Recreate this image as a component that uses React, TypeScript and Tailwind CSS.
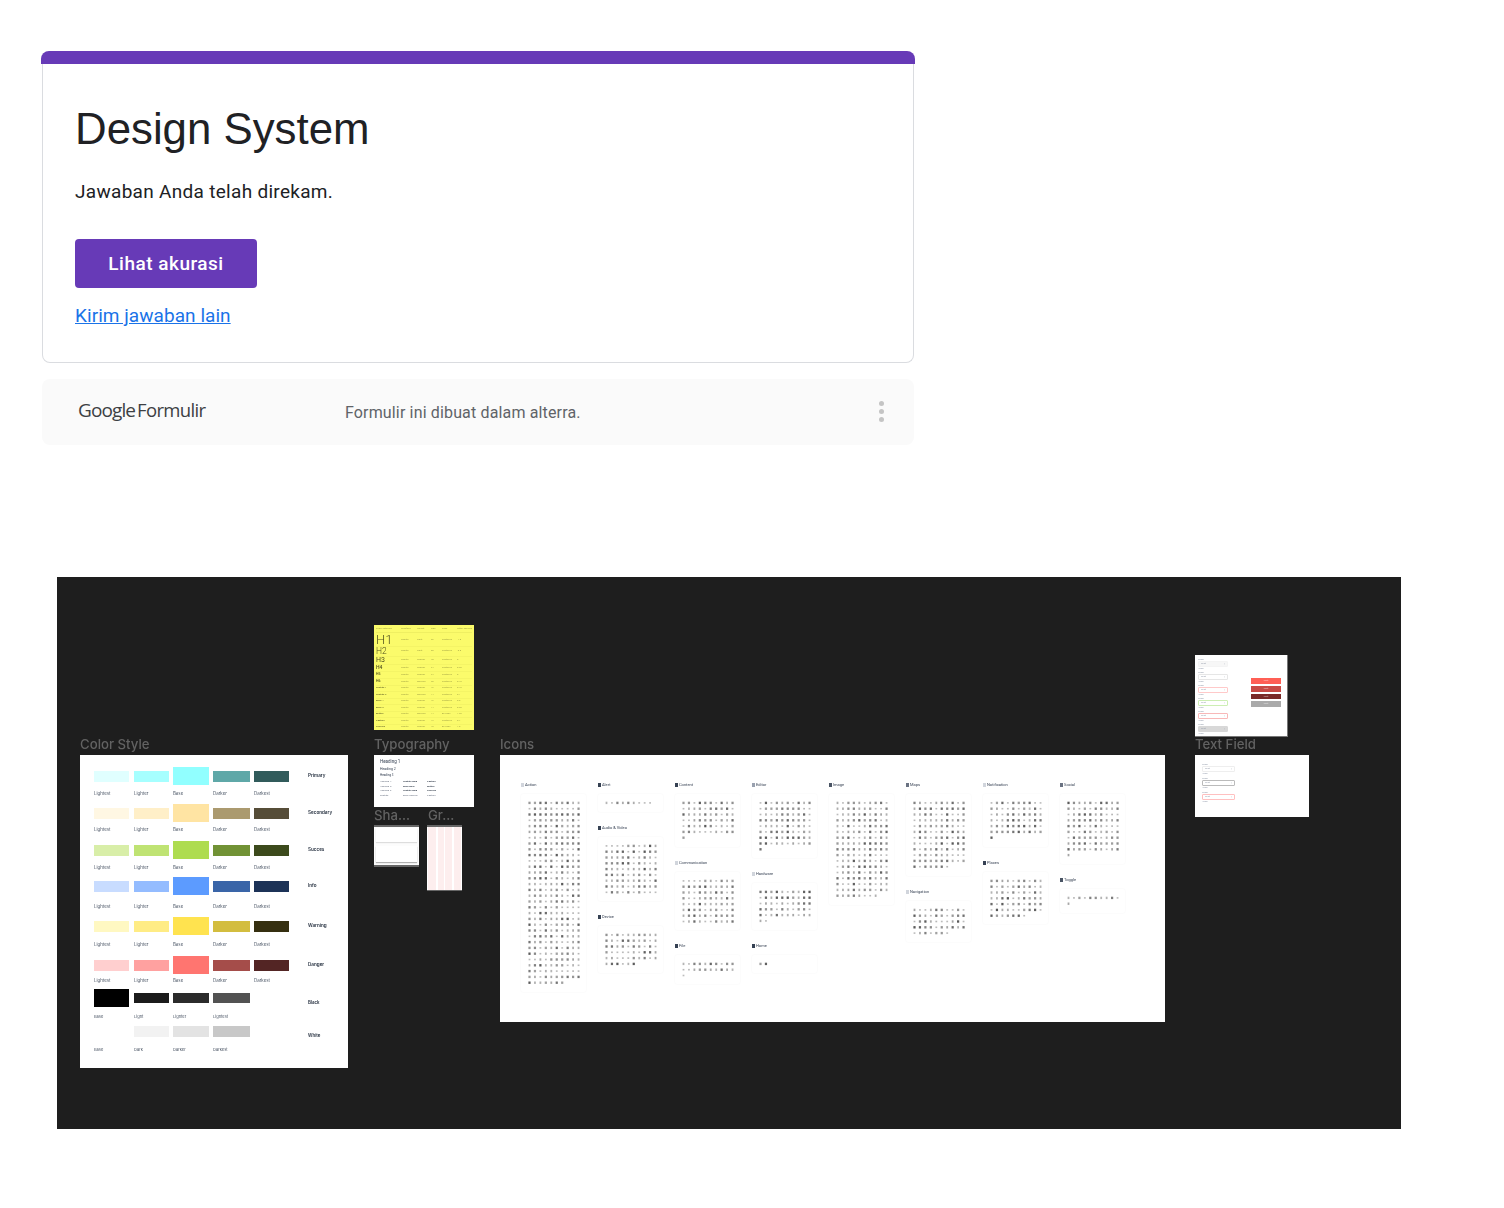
import React from 'react';
import { Fragment } from 'react';

const labels = ['Lightest', 'Lighter', 'Base', 'Darker', 'Darkest'];

const colorRows = [
  { name: 'Primary', colors: ['#e0ffff', '#a6ffff', '#91ffff', '#5fa8a8', '#315b5b'], rowClass: 'h-[37px]', labelClass: 'mt-[5.5px]' },
  { name: 'Secondary', colors: ['#fff7e3', '#ffefc8', '#ffe4a3', '#ab9a6f', '#564d38'], rowClass: 'h-[37px]', labelClass: 'mt-[4.5px]' },
  { name: 'Succes', colors: ['#d8eea8', '#bfe373', '#aedc50', '#719235', '#3c4a1c'], rowClass: 'h-[36px]', labelClass: 'mt-[5.5px]' },
  { name: 'Info', colors: ['#c8dcff', '#94bcff', '#5c9bff', '#3a65a8', '#1c3257'], rowClass: 'h-[40px]', labelClass: 'mt-[8.5px]' },
  { name: 'Warning', colors: ['#fff8c2', '#ffec85', '#ffe34f', '#d3bd3f', '#352f10'], rowClass: 'h-[39px]', labelClass: 'mt-[6.5px]' },
  { name: 'Danger', colors: ['#ffcfcf', '#ffa1a0', '#ff7570', '#a54d4a', '#532524'], rowClass: 'h-[33px]', labelClass: 'mt-[3.5px]' },
];

const iconColumns = [
  [{ name: 'Action', count: 317, tint: 'bg-gray-300' }],
  [
    { name: 'Alert', count: 9, tint: 'bg-gray-700' },
    { name: 'Audio & Video', count: 90, tint: 'bg-gray-700' },
    { name: 'Device', count: 56, tint: 'bg-gray-700' },
  ],
  [
    { name: 'Content', count: 61, tint: 'bg-gray-700' },
    { name: 'Communication', count: 80, tint: 'bg-gray-300' },
    { name: 'File', count: 21, tint: 'bg-gray-700' },
  ],
  [
    { name: 'Editor', count: 81, tint: 'bg-gray-400' },
    { name: 'Hardware', count: 52, tint: 'bg-gray-300' },
    { name: 'Home', count: 2, tint: 'bg-gray-700' },
  ],
  [{ name: 'Image', count: 168, tint: 'bg-gray-600' }],
  [
    { name: 'Maps', count: 117, tint: 'bg-gray-500' },
    { name: 'Navigation', count: 47, tint: 'bg-gray-300' },
  ],
  [
    { name: 'Notification', count: 61, tint: 'bg-gray-300' },
    { name: 'Places', count: 67, tint: 'bg-gray-700' },
  ],
  [
    { name: 'Social', count: 91, tint: 'bg-gray-500' },
    { name: 'Toggle', count: 11, tint: 'bg-gray-600' },
  ],
];

const typeRows = [
  { name: 'H1', cls: 'text-[13px] font-light', rowClass: 'h-[14px]', vals: ['Roboto', 'Light', '96', 'Sentence', '-1.5'] },
  { name: 'H2', cls: 'text-[8.5px] font-light', rowClass: 'h-[9.5px]', vals: ['Roboto', 'Light', '60', 'Sentence', '-0.5'] },
  { name: 'H3', cls: 'text-[7px]', rowClass: 'h-[8px]', vals: ['Roboto', 'Regular', '48', 'Sentence', '0'] },
  { name: 'H4', cls: 'text-[5px] font-medium', rowClass: 'h-[7.5px]', vals: ['Roboto', 'Regular', '34', 'Sentence', '0.25'] },
  { name: 'H5', cls: 'text-[3.5px] font-medium', rowClass: 'h-[7px]', vals: ['Roboto', 'Regular', '24', 'Sentence', '0'] },
  { name: 'H6', cls: 'text-[3.5px] font-medium', rowClass: 'h-[6.5px]', vals: ['Roboto', 'Medium', '20', 'Sentence', '0.15'] },
  { name: 'Subtitle 1', cls: 'text-[2.5px]', rowClass: 'h-[6.5px]', vals: ['Roboto', 'Regular', '16', 'Sentence', '0.15'] },
  { name: 'Subtitle 2', cls: 'text-[2.5px]', rowClass: 'h-[6.5px]', vals: ['Roboto', 'Medium', '14', 'Sentence', '0.1'] },
  { name: 'Body 1', cls: 'text-[2.5px]', rowClass: 'h-[6.5px]', vals: ['Roboto', 'Regular', '16', 'Sentence', '0.5'] },
  { name: 'Body 2', cls: 'text-[2.5px]', rowClass: 'h-[6.5px]', vals: ['Roboto', 'Regular', '14', 'Sentence', '0.25'] },
  { name: 'Button', cls: 'text-[2.5px]', rowClass: 'h-[6.5px]', vals: ['Roboto', 'Medium', '14', 'All caps', '1.25'] },
  { name: 'Caption', cls: 'text-[2.5px]', rowClass: 'h-[6.5px]', vals: ['Roboto', 'Regular', '12', 'Sentence', '0.4'] },
  { name: 'Overline', cls: 'text-[2.5px]', rowClass: 'h-[6.5px]', vals: ['Roboto', 'Regular', '10', 'All caps', '1.5'] },
];

// just enough variation so the icon sheet doesn't look like a flat dot grid
const shade = (i: number) => {
  const n = Math.sin(i * 12.9898 + 4.1) * 43758.5453;
  return n - Math.floor(n);
};

const IconDots = ({ count, seed }: { count: number; seed: number }) => {
  const rows = Math.ceil(count / 10);
  return (
    <svg width={54.5} height={rows * 5.8} className="block">
      {Array.from({ length: count }).map((_, i) => {
        const s = shade(i + seed);
        const w = s > 0.5 ? 2.2 : 1.8;
        const h = s > 0.25 ? 2.4 : 1.6;
        const x = (i % 10) * 5.45 + (3 - w) / 2;
        const y = Math.floor(i / 10) * 5.8 + 1.4 + (3 - h) / 2;
        return <rect key={i} x={x} y={y} width={w} height={h} fill="#222" opacity={0.3 + s * s * 0.45} />;
      })}
    </svg>
  );
};

const IconGroup = ({ name, count, tint, seed }: { name: string; count: number; tint: string; seed: number }) => (
  <div>
    <div className="h-[18px] flex items-center gap-[1px] text-[4px] text-gray-700">
      <span className={`w-[3px] h-[4px] ${tint}`} />
      {name}
    </div>
    <div className="w-[65px] rounded-[2px] shadow-[0_0_2px_rgba(0,0,0,0.05)] pl-[7px] py-[6px] bg-white overflow-hidden">
      <IconDots count={count} seed={seed} />
    </div>
  </div>
);

const FieldMini = ({ box }: { box: string }) => (
  <div>
    <div className="h-[3px] text-[2.5px] leading-[3px] text-gray-400">Label</div>
    <div className={`h-[6px] rounded-[1px] border flex items-center justify-between px-[2px] text-[2.5px] text-gray-400 ${box}`}>
      <span>Text</span>
      <span>/</span>
    </div>
    <div className="h-[3px] mb-[1px] text-[2px] leading-[3px] text-gray-400">Helper</div>
  </div>
);

const CanvasTitle = ({ className, children }: { className: string; children: React.ReactNode }) => (
  <div className={`absolute text-[13.2px] leading-[16px] font-medium text-[#626262] blur-[0.4px] ${className}`}>{children}</div>
);

const App: React.FC = () => {
  let seed = 0;

  return (
    <div className="min-h-[1208px] bg-white font-['Roboto',sans-serif] text-[#202124]">
      <div className="pt-[51px] pl-[41px] w-[915px]">
        <div className="h-[13px] bg-[#673ab7] rounded-t-[8px]" />
        <div className="mx-[1px] h-[299px] border border-t-0 border-[#dadce0] rounded-b-[8px] pl-[32px] pt-[39px] bg-white">
          <h1 className="text-[43.8px] leading-[52px] text-[#202124] font-['Liberation_Sans',sans-serif]">Design System</h1>
          <p className="mt-[25px] text-[19px] leading-[24px] tracking-[0.3px]">Jawaban Anda telah direkam.</p>
          <button className="block mt-[35px] w-[182px] h-[49px] pt-[1px] rounded-[4px] bg-[#673ab7] text-white text-[19px] font-medium tracking-[0.5px]">Lihat akurasi</button>
          <a href="#" className="inline-block mt-[16px] text-[19px] leading-[24px] tracking-[0.05px] underline text-[#1a73e8]">Kirim jawaban lain</a>
        </div>
        <div className="mx-[1px] mt-[16px] h-[66px] bg-[#fafafa] rounded-[8px] flex items-center pl-[36px] pr-[30px] text-[#3c4043]">
          <div className="w-[267px] flex items-baseline -mt-[3px] font-['Open_Sans',sans-serif]">
            <span className="text-[19px] tracking-[-0.9px]">Google</span>
            <span className="ml-[2px] text-[18.5px] tracking-[-0.65px]">Formulir</span>
          </div>
          <span className="flex-1 mt-[1px] text-[16px] tracking-[0.15px] text-[#5f6368]">Formulir ini dibuat dalam alterra.</span>
          <div className="flex flex-col gap-[3px] -mt-[1px]">
            <span className="w-[5px] h-[5px] rounded-full bg-[#c4c4c4]" />
            <span className="w-[5px] h-[5px] rounded-full bg-[#c4c4c4]" />
            <span className="w-[5px] h-[5px] rounded-full bg-[#c4c4c4]" />
          </div>
        </div>
      </div>

      {/* free canvas, frames sit where the design file has them */}
      <div className="relative mt-[132px] ml-[57px] w-[1344px] h-[552px] bg-[#1e1e1e] font-['Inter',sans-serif]">
        <CanvasTitle className="left-[23px] top-[159px]">Color Style</CanvasTitle>
        <CanvasTitle className="left-[317px] top-[159px]">Typography</CanvasTitle>
        <CanvasTitle className="left-[443px] top-[159px]">Icons</CanvasTitle>
        <CanvasTitle className="left-[1138px] top-[159px]">Text Field</CanvasTitle>
        <CanvasTitle className="left-[317px] top-[230px]">Sha...</CanvasTitle>
        <CanvasTitle className="left-[371px] top-[230px]">Gr...</CanvasTitle>

        {/* Color style */}
        <div className="absolute left-[23px] top-[178px] w-[268px] h-[313px] bg-white pt-[12px] pl-[14px] blur-[0.4px]">
          {colorRows.map(row => (
            <div key={row.name} className={row.rowClass}>
              <div className="grid grid-cols-[40px_39px_40px_41px_54px_auto] items-center h-[18px]">
                {row.colors.map((c, i) => (
                  <span key={c} className={i === 2 ? 'w-[36px] h-[18px]' : i === 3 ? 'w-[37px] h-[11px]' : 'w-[35px] h-[11px]'} style={{ backgroundColor: c }} />
                ))}
                <span className="text-[4.6px] font-semibold text-gray-800">{row.name}</span>
              </div>
              <div className={`grid grid-cols-[40px_39px_40px_41px_54px] text-[4.4px] leading-[5px] text-gray-600 ${row.labelClass}`}>
                {labels.map(l => <span key={l}>{l}</span>)}
              </div>
            </div>
          ))}
          <div className="h-[33px]">
            <div className="grid grid-cols-[40px_39px_40px_95px_auto] items-center h-[18px]">
              <span className="w-[35px] h-[18px] bg-black" />
              <span className="w-[35px] h-[10px] bg-[#1b1b1b]" />
              <span className="w-[36px] h-[10px] bg-[#2b2b2b]" />
              <span className="w-[37px] h-[10px] bg-[#525252]" />
              <span className="mt-[10px] text-[4.4px] font-semibold text-gray-800">Black</span>
            </div>
            <div className="mt-[6.5px] grid grid-cols-[40px_39px_40px_41px] text-[4px] leading-[5px] text-gray-600">
              <span>Base</span><span>Light</span><span>Lighter</span><span>Lightest</span>
            </div>
          </div>
          <div className="h-[33px]">
            <div className="grid grid-cols-[40px_39px_40px_95px_auto] items-center h-[18px]">
              <span className="w-[35px] h-[11px] bg-white" />
              <span className="w-[35px] h-[11px] bg-[#f2f2f2]" />
              <span className="w-[36px] h-[11px] bg-[#e3e3e3]" />
              <span className="w-[37px] h-[11px] bg-[#c8c8c8]" />
              <span className="mt-[10px] text-[4.4px] font-semibold text-gray-800">White</span>
            </div>
            <div className="mt-[6.5px] grid grid-cols-[40px_39px_40px_41px] text-[4px] leading-[5px] text-gray-600">
              <span>Base</span><span>Dark</span><span>Darker</span><span>Darkest</span>
            </div>
          </div>
        </div>

        {/* Typography scale */}
        <div className="absolute left-[317px] top-[48px] w-[100px] h-[105px] overflow-hidden bg-[#fbfb6b] px-[2px] blur-[0.4px] font-['Roboto',sans-serif] text-[#a3a345] whitespace-nowrap">
          <div className="h-[8px] grid grid-cols-[25px_16px_14px_11px_15px_1fr] items-center text-[2.4px] border-b border-[#efef62]">
            <span>Scale Category</span><span>Typeface</span><span>Weight</span><span>Size</span><span>Case</span><span>Letter spacing</span>
          </div>
          {typeRows.map(r => (
            <div key={r.name} className={`grid grid-cols-[25px_16px_14px_11px_15px_1fr] items-center text-[2.4px] border-b border-[#f4f466] ${r.rowClass}`}>
              <span className={`leading-none text-[#50501e] ${r.cls}`}>{r.name}</span>
              {r.vals.map((v, i) => <span key={i}>{v}</span>)}
            </div>
          ))}
        </div>

        <div className="absolute left-[317px] top-[178px] w-[100px] h-[52px] bg-white pl-[6px] pt-[4px] blur-[0.3px] font-['Roboto',sans-serif] text-gray-700">
          <div className="text-[4.5px] leading-[6px]">Heading 1</div>
          <div className="mt-[1px] text-[3.5px] leading-[6px]">Heading 2</div>
          <div className="text-[3px] leading-[7px]">Heading 3</div>
          <div className="mt-[1px] grid grid-cols-[23px_24px_20px] text-[2.5px] leading-[4.5px] text-gray-500">
            <span>Heading 4</span><span className="font-medium text-gray-800">Subtitle Bold</span><span className="font-medium text-gray-800">Caption</span>
            <span>Heading 5</span><span className="font-medium text-gray-800">Body Bold</span><span className="font-medium text-gray-800">Button</span>
            <span>Heading 6</span><span className="font-medium text-gray-800">Subtitle Bold</span><span className="font-medium text-gray-800">Overline</span>
            <span>Subtitle</span><span>Body Regular</span><span>Caption</span>
          </div>
        </div>

        {/* Shadow */}
        <div className="absolute left-[317px] top-[248px] w-[45px] h-[42px] bg-[#fcfcfc] border-t-2 border-b-2 border-[#666] px-[2px] pt-[1px] flex flex-col gap-[4px] blur-[0.3px]">
          <div className="h-[14px] bg-white shadow-[0_1px_1px_rgba(0,0,0,0.12)]" />
          <div className="h-[16px] bg-white shadow-[0_1px_1px_rgba(0,0,0,0.3)]" />
        </div>

        {/* Grid */}
        <div className="absolute left-[370px] top-[248px] w-[35px] h-[66px] bg-white border-t-2 border-b border-[#666] grid grid-cols-[8px_6px_7px_7px] justify-between px-[1px] blur-[0.2px]">
          <span className="bg-[#fdeeee]" /><span className="bg-[#fdeeee]" /><span className="bg-[#fdeeee]" /><span className="bg-[#fdeeee]" />
        </div>

        {/* Icon sheet */}
        <div className="absolute left-[443px] top-[178px] w-[665px] h-[267px] bg-white pl-[21px] pt-[21px] flex gap-[12px] blur-[0.5px] font-['Roboto',sans-serif]">
          {iconColumns.map((col, c) => (
            <div key={c} className="w-[65px] flex flex-col gap-[7px]">
              {col.map(g => {
                seed += g.count;
                return (
                  <Fragment key={g.name}>
                    <IconGroup name={g.name} count={g.count} tint={g.tint} seed={seed} />
                  </Fragment>
                );
              })}
            </div>
          ))}
        </div>

        {/* Text fields and buttons */}
        <div className="absolute left-[1138px] top-[78px] w-[93px] h-[82px] bg-white border-r border-b border-[#777] flex pt-[3px] pl-[3px] blur-[0.3px] font-['Roboto',sans-serif]">
          <div className="w-[30px] flex flex-col">
            <FieldMini box="border-[#f4f4f4] bg-[#f7f7f7]" />
            <FieldMini box="border-[#e6e6e6] bg-white" />
            <FieldMini box="border-[#ffc9c9] bg-white" />
            <FieldMini box="border-[#cdeeb4] bg-white" />
            <FieldMini box="border-[#f8b8b8] bg-white" />
            <FieldMini box="border-[#d8d8d8] bg-[#d8d8d8]" />
          </div>
          <div className="ml-[23px] mt-[20px] w-[30px] flex flex-col gap-[2px] text-center text-[2.5px] leading-[6px] text-white/60">
            <div className="h-[6px] bg-[#ff5f55]">Text</div>
            <div className="h-[6px] bg-[#c84a45]">Text</div>
            <div className="h-[5px] bg-[#7a2a28]">Text</div>
            <div className="h-[6px] bg-[#aaaaaa]">Text</div>
          </div>
        </div>

        <div className="absolute left-[1138px] top-[178px] w-[114px] h-[62px] bg-white pl-[7px] pt-[8px] blur-[0.3px] font-['Roboto',sans-serif]">
          <div className="w-[33px] flex flex-col gap-[1px]">
            <FieldMini box="border-[#eeeeee] bg-white" />
            <FieldMini box="border-[#bbbbbb] bg-white" />
            <FieldMini box="border-[#ffc0c0] bg-white" />
          </div>
        </div>
      </div>
    </div>
  );
};

export default App;
